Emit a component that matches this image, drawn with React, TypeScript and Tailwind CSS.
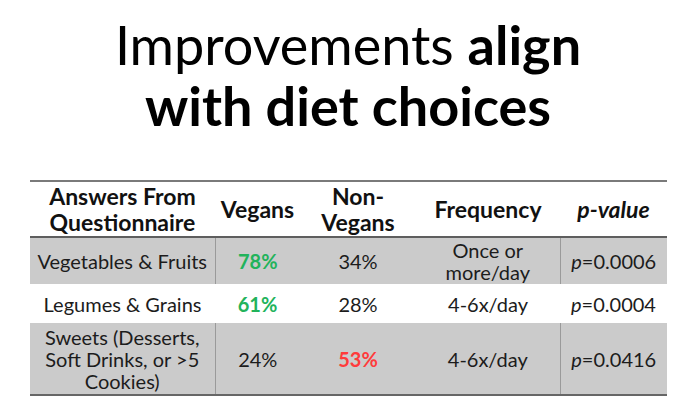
import React from "react";

type Row = {
  answer: React.ReactNode;
  vegans: string;
  nonVegans: string;
  freq: React.ReactNode;
  p: string;
  gray: boolean;
  height: string;
  vegColor: string;
  nonColor: string;
};

const rows: Row[] = [
  {
    answer: "Vegetables & Fruits",
    vegans: "78%",
    nonVegans: "34%",
    freq: (
      <>
        Once or
        <br />
        more/day
      </>
    ),
    p: "0.0006",
    gray: true,
    height: "h-[47px]",
    vegColor: "text-[#22b35b] font-bold",
    nonColor: "",
  },
  {
    answer: "Legumes & Grains",
    vegans: "61%",
    nonVegans: "28%",
    freq: "4-6x/day",
    p: "0.0004",
    gray: false,
    height: "h-[39px]",
    vegColor: "text-[#22b35b] font-bold",
    nonColor: "",
  },
  {
    answer: (
      <>
        Sweets (Desserts,
        <br />
        Soft Drinks, or &gt;5
        <br />
        Cookies)
      </>
    ),
    vegans: "24%",
    nonVegans: "53%",
    freq: "4-6x/day",
    p: "0.0416",
    gray: true,
    height: "h-[72px]",
    vegColor: "",
    nonColor: "text-[#ff3b3b] font-bold",
  },
];

const App = () => {
  return (
    <div className="w-[696px] h-[408px] bg-white overflow-hidden font-['Lato',sans-serif] text-[#1c1c1c]">
      <h1 className="pt-[14px] text-center text-[54px] leading-[61px] text-black font-normal">
        Improvements <span className="font-bold">align</span>
        <br />
        <span className="font-bold">with diet choices</span>
      </h1>
      <div className="pl-[30px] pt-[44px]">
        <table className="table-fixed border-collapse w-[637px] text-center text-[20px] leading-[22px]">
          <colgroup>
            <col className="w-[185px]" />
            <col className="w-[85px]" />
            <col className="w-[116px]" />
            <col className="w-[144px]" />
            <col className="w-[107px]" />
          </colgroup>
          <thead>
            <tr className="h-[56px] border-t-2 border-b-2 border-t-[#7a7a7a] border-b-[#5e5e5e] font-bold text-[23px] leading-[26px] text-[#111]">
              <th>
                Answers From
                <br />
                Questionnaire
              </th>
              <th>Vegans</th>
              <th>
                Non-
                <br />
                Vegans
              </th>
              <th>Frequency</th>
              <th className="italic">p-value</th>
            </tr>
          </thead>
          <tbody>
            {rows.map((row, i) => (
              <tr
                key={i}
                className={`${row.height} ${row.gray ? "bg-[#cbcbcb]" : "bg-white"} ${
                  i === rows.length - 1 ? "border-b-2 border-b-[#666666]" : ""
                }`}
              >
                <td className={row.gray ? "border-r border-r-[#9a9a9a]" : ""}>{row.answer}</td>
                <td className={row.vegColor}>{row.vegans}</td>
                <td className={row.nonColor}>{row.nonVegans}</td>
                <td className={row.gray ? "border-r border-r-[#9a9a9a]" : ""}>{row.freq}</td>
                <td>
                  <span className="italic">p</span>={row.p}
                </td>
              </tr>
            ))}
          </tbody>
        </table>
      </div>
    </div>
  );
};

export default App;
